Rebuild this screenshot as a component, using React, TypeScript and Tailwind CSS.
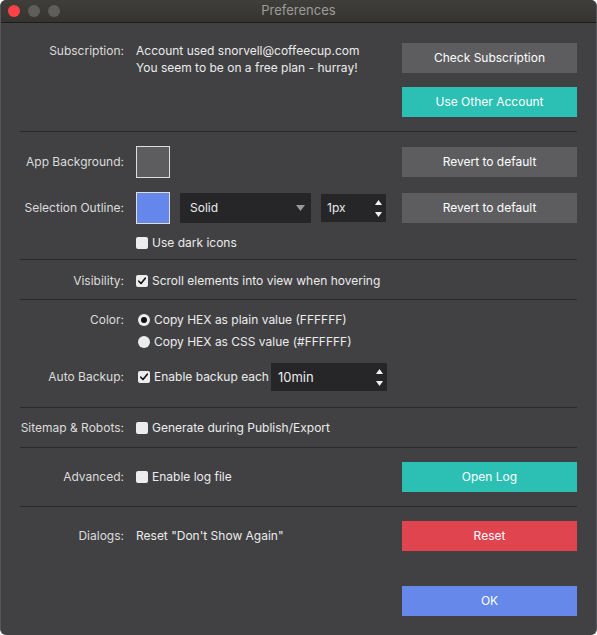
import React from "react";

const font = { fontFamily: "Inter, 'Noto Sans', sans-serif" };

function Checkbox({ checked = false, className = "" }: { checked?: boolean; className?: string }) {
    return (
        <span className={`w-[12px] h-[12px] shrink-0 rounded-[2px] bg-[#ececec] flex items-center justify-center ${className}`}>
            {checked && (
                <svg width="10" height="10" viewBox="0 0 10 10">
                    <path d="M1.8 5.2 L4 7.5 L8.3 2.2" fill="none" stroke="#111" strokeWidth="1.6" strokeLinecap="round" strokeLinejoin="round" />
                </svg>
            )}
        </span>
    );
}

function Radio({ checked = false }: { checked?: boolean }) {
    return (
        <span className="ml-[2px] w-[12px] h-[12px] shrink-0 rounded-full bg-[#ececec] flex items-center justify-center">
            {checked && <span className="w-[6px] h-[6px] rounded-full bg-[#111]" />}
        </span>
    );
}

function Stepper() {
    return (
        <span className="flex flex-col items-center gap-[7px] pr-[3px]">
            <svg width="7" height="5" viewBox="0 0 7 5">
                <path d="M3.5 0 L7 5 L0 5 Z" fill="#f2f2f2" />
            </svg>
            <svg width="7" height="5" viewBox="0 0 7 5">
                <path d="M0 0 L7 0 L3.5 5 Z" fill="#f2f2f2" />
            </svg>
        </span>
    );
}

function Button({ label, color }: { label: string; color: string }) {
    return (
        <button className={`h-[30px] w-full text-[12px] text-white ${color}`}>{label}</button>
    );
}

function Label({ children, className = "" }: { children: React.ReactNode; className?: string }) {
    return <div className={`text-right text-[12px] text-[#dcdcdc] ${className}`}>{children}</div>;
}

export default function App() {
    return (
        <div className="min-h-screen bg-white" style={font}>
            <div className="w-[597px] h-[635px] bg-[#414143] rounded-[6px] overflow-hidden flex flex-col border-x border-[#56565a]">
                {/* Title bar */}
                <div className="h-[23px] shrink-0 grid grid-cols-[1fr_auto_1fr] items-center border-b border-[#1c1c1c] bg-gradient-to-b from-[#3f3e3a] to-[#353430]">
                    <div className="flex items-center gap-[8px] pl-[7px]">
                        <span className="w-[12px] h-[12px] rounded-full bg-[#fc4147]" />
                        <span className="w-[12px] h-[12px] rounded-full bg-[#5f5e5b]" />
                        <span className="w-[12px] h-[12px] rounded-full bg-[#5f5e5b]" />
                    </div>
                    <div className="text-[13px] text-[#9d9c99]">Preferences</div>
                    <div />
                </div>

                <div className="flex flex-col px-[19px] text-[12px] text-[#ececec]">
                    {/* Subscription */}
                    <div className="grid grid-cols-[104px_254px_175px] gap-x-3 pt-[20px] pb-[14px] border-b border-[#2a2a2c]">
                        <Label className="leading-[17px] -mt-[1px]">Subscription:</Label>
                        <div className="leading-[17px] -mt-[1px]">
                            <div>Account used snorvell@coffeecup.com</div>
                            <div>You seem to be on a free plan - hurray!</div>
                        </div>
                        <div className="flex flex-col gap-[14px]">
                            <Button label="Check Subscription" color="bg-[#5d5d5f]" />
                            <Button label="Use Other Account" color="bg-[#2cc0b4]" />
                        </div>
                    </div>

                    {/* Colors */}
                    <div className="grid grid-cols-[104px_254px_175px] gap-x-3 gap-y-[14px] pt-[14px] pb-[8px] border-b border-[#2a2a2c]">
                        <Label className="self-center">App Background:</Label>
                        <div className="flex items-center">
                            <span className="w-[34px] h-[32px] border border-[#dedede] bg-[#5d5d5f]" />
                        </div>
                        <div className="flex items-center">
                            <Button label="Revert to default" color="bg-[#5d5d5f]" />
                        </div>

                        <Label className="self-center">Selection Outline:</Label>
                        <div className="flex items-center gap-[10px]">
                            <span className="w-[34px] h-[32px] shrink-0 border border-[#dedede] bg-[#6587ec]" />
                            <div className="w-[131px] h-[30px] bg-[#262628] flex items-center justify-between pl-[10px] pr-[6px]">
                                <span>Solid</span>
                                <svg width="9" height="6" viewBox="0 0 9 6">
                                    <path d="M0 0 L9 0 L4.5 6 Z" fill="#9a9a9a" />
                                </svg>
                            </div>
                            <div className="w-[65px] h-[28px] bg-[#262628] flex items-center justify-between pl-[6px] pr-[1px]">
                                <span>1px</span>
                                <Stepper />
                            </div>
                        </div>
                        <div className="flex items-center">
                            <Button label="Revert to default" color="bg-[#5d5d5f]" />
                        </div>

                        <div />
                        <div className="col-span-2 -mt-[3px] flex items-center gap-[4px] leading-[16px]">
                            <Checkbox />
                            <span>Use dark icons</span>
                        </div>
                    </div>

                    {/* Visibility */}
                    <div className="grid grid-cols-[104px_254px_175px] gap-x-3 items-center pt-[13px] pb-[10px] leading-[16px] border-b border-[#2a2a2c]">
                        <Label>Visibility:</Label>
                        <div className="col-span-2 flex items-center gap-[4px]">
                            <Checkbox checked />
                            <span>Scroll elements into view when hovering</span>
                        </div>
                    </div>

                    {/* Color + backup */}
                    <div className="grid grid-cols-[104px_254px_175px] gap-x-3 items-center pt-[12px] pb-[16px] leading-[16px] border-b border-[#2a2a2c]">
                        <Label>Color:</Label>
                        <div className="col-span-2 flex items-center gap-[4px]">
                            <Radio checked />
                            <span>Copy HEX as plain value (FFFFFF)</span>
                        </div>
                        <div className="col-start-2 col-span-2 mt-[6px] flex items-center gap-[4px]">
                            <Radio />
                            <span>Copy HEX as CSS value (#FFFFFF)</span>
                        </div>
                        <Label className="mt-[13px]">Auto Backup:</Label>
                        <div className="col-span-2 mt-[13px] flex items-center">
                            <Checkbox checked className="ml-[2px]" />
                            <span className="ml-[4px] mr-[2px]">Enable backup each</span>
                            <div className="w-[116px] h-[28px] bg-[#262628] flex items-center justify-between pl-[7px] pr-[1px]">
                                <span className="text-[13px]">10min</span>
                                <Stepper />
                            </div>
                        </div>
                    </div>

                    {/* Sitemap */}
                    <div className="grid grid-cols-[104px_254px_175px] gap-x-3 items-center pt-[12px] pb-[11px] leading-[16px] border-b border-[#2a2a2c]">
                        <Label>Sitemap &amp; Robots:</Label>
                        <div className="col-span-2 flex items-center gap-[4px]">
                            <Checkbox />
                            <span>Generate during Publish/Export</span>
                        </div>
                    </div>

                    {/* Advanced */}
                    <div className="grid grid-cols-[104px_254px_175px] gap-x-3 items-center py-[14px] border-b border-[#2a2a2c]">
                        <Label>Advanced:</Label>
                        <div className="flex items-center gap-[4px]">
                            <Checkbox />
                            <span>Enable log file</span>
                        </div>
                        <Button label="Open Log" color="bg-[#2cc0b4]" />
                    </div>

                    {/* Dialogs */}
                    <div className="grid grid-cols-[104px_254px_175px] gap-x-3 items-center pt-[14px]">
                        <Label>Dialogs:</Label>
                        <div>Reset "Don't Show Again"</div>
                        <Button label="Reset" color="bg-[#e0444f]" />
                        <div className="col-start-3 mt-[35px]">
                            <Button label="OK" color="bg-[#6688eb]" />
                        </div>
                    </div>
                </div>
            </div>
        </div>
    );
}
